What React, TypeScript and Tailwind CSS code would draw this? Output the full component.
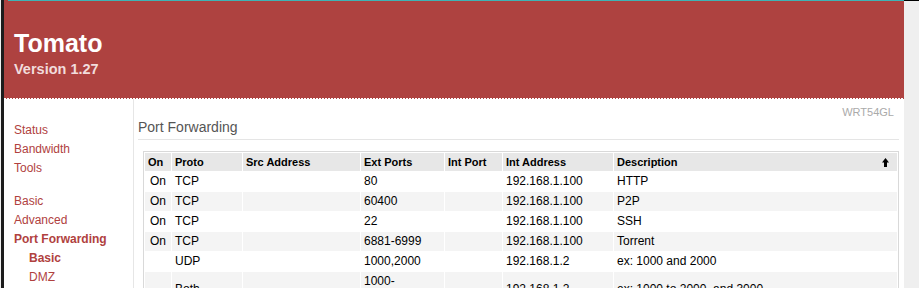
import React from "react";

const rows = [
  { on: "On", proto: "TCP", src: "", ext: "80", intPort: "", addr: "192.168.1.100", desc: "HTTP" },
  { on: "On", proto: "TCP", src: "", ext: "60400", intPort: "", addr: "192.168.1.100", desc: "P2P" },
  { on: "On", proto: "TCP", src: "", ext: "22", intPort: "", addr: "192.168.1.100", desc: "SSH" },
  { on: "On", proto: "TCP", src: "", ext: "6881-6999", intPort: "", addr: "192.168.1.100", desc: "Torrent" },
  { on: "", proto: "UDP", src: "", ext: "1000,2000", intPort: "", addr: "192.168.1.2", desc: "ex: 1000 and 2000" },
  { on: "", proto: "Both", src: "", ext: "1000-2000,3000", intPort: "", addr: "192.168.1.2", desc: "ex: 1000 to 2000, and 3000" },
];

function SortArrow() {
  return (
    <svg width="7" height="9" viewBox="0 0 7 9" className="block">
      <path d="M3.5 0 L7 4.5 L5 4.5 L5 9 L2 9 L2 4.5 L0 4.5 Z" fill="#000" />
    </svg>
  );
}

export default function App() {
  const link = "block text-[#b0413e] leading-[19px]";
  const th = "bg-[#e7e7e7] font-bold text-[11px] text-left px-[3px] py-[2px] leading-[14px] align-middle";
  const td = "px-[3px] py-[2px] leading-[15px] align-middle";

  return (
    <div
      className="w-[919px] h-[288px] overflow-hidden flex bg-[#efefef] text-[12px] text-black"
      style={{ fontFamily: '"Liberation Sans", Arial, sans-serif' }}
    >
      <div className="w-px shrink-0" />
      <div className="w-[3px] shrink-0 bg-[#1c1c1c]" />

      <div className="w-[900px] shrink-0 flex flex-col bg-white">
        {/* header */}
        <div className="flex h-px shrink-0">
          <div className="w-[4px] bg-[#ae4240]" />
          <div className="flex-1 bg-[#3fb3b5]" />
        </div>
        <div className="h-[97px] shrink-0 bg-[#ae4240] pl-[10px] pt-[30px]">
          <div className="text-white font-bold text-[25px] leading-[24px]">Tomato</div>
          <div className="text-[#f1dcdc] font-bold text-[14.5px] leading-[16px] mt-[6px]">Version 1.27</div>
        </div>
        <div className="h-px shrink-0 bg-[#ae4240] bg-[repeating-linear-gradient(90deg,#ffffff_0px,#ffffff_2px,transparent_2px,transparent_3px)]" />

        <div className="flex flex-1 min-h-0">
          {/* sidebar */}
          <div className="w-[130px] shrink-0 border-r border-[#e6e6e6] pl-[10px] pt-[22px]">
            <a className={link}>Status</a>
            <a className={link}>Bandwidth</a>
            <a className={link}>Tools</a>
            <div className="mt-[14px]">
              <a className={link}>Basic</a>
              <a className={link}>Advanced</a>
              <a className={link + " font-bold"}>Port Forwarding</a>
              <a className={link + " font-bold ml-[15px]"}>Basic</a>
              <a className={link + " ml-[15px]"}>DMZ</a>
            </div>
          </div>

          {/* content */}
          <div className="flex-1 pl-[4px] pr-[5px]">
            <div className="text-right text-[#aaaaaa] text-[11px] leading-[13px] pt-[7px] pr-[5px]">WRT54GL</div>
            <div className="text-[#555555] text-[14px] leading-[16px] pb-[4px] border-b border-[#e5e5e5]">
              Port Forwarding
            </div>

            <table className="mt-[11px] ml-[5px] w-[756px] table-fixed border-separate border-spacing-[1px] border border-[#d9d9d9] bg-white">
              <thead>
                <tr>
                  <th className={th + " w-[26px] text-center"}>On</th>
                  <th className={th + " w-[70px]"}>Proto</th>
                  <th className={th + " w-[117px]"}>Src Address</th>
                  <th className={th + " w-[83px]"}>Ext Ports</th>
                  <th className={th + " w-[57px]"}>Int Port</th>
                  <th className={th + " w-[110px]"}>Int Address</th>
                  <th className={th + " w-[283px]"}>
                    <div className="flex items-center justify-between pr-[5px]">
                      <span>Description</span>
                      <SortArrow />
                    </div>
                  </th>
                </tr>
              </thead>
              <tbody>
                {rows.map((r, i) => (
                  <tr key={i} className={i % 2 === 1 ? "bg-[#f4f4f4]" : "bg-white"}>
                    <td className={td + " text-center"}>{r.on}</td>
                    <td className={td}>{r.proto}</td>
                    <td className={td}>{r.src}</td>
                    <td className={td}>{r.ext}</td>
                    <td className={td}>{r.intPort}</td>
                    <td className={td}>{r.addr}</td>
                    <td className={td}>{r.desc}</td>
                  </tr>
                ))}
              </tbody>
            </table>
          </div>
        </div>
      </div>

      <div className="flex-1 flex flex-col">
        <div className="h-px bg-black" />
      </div>
    </div>
  );
}
